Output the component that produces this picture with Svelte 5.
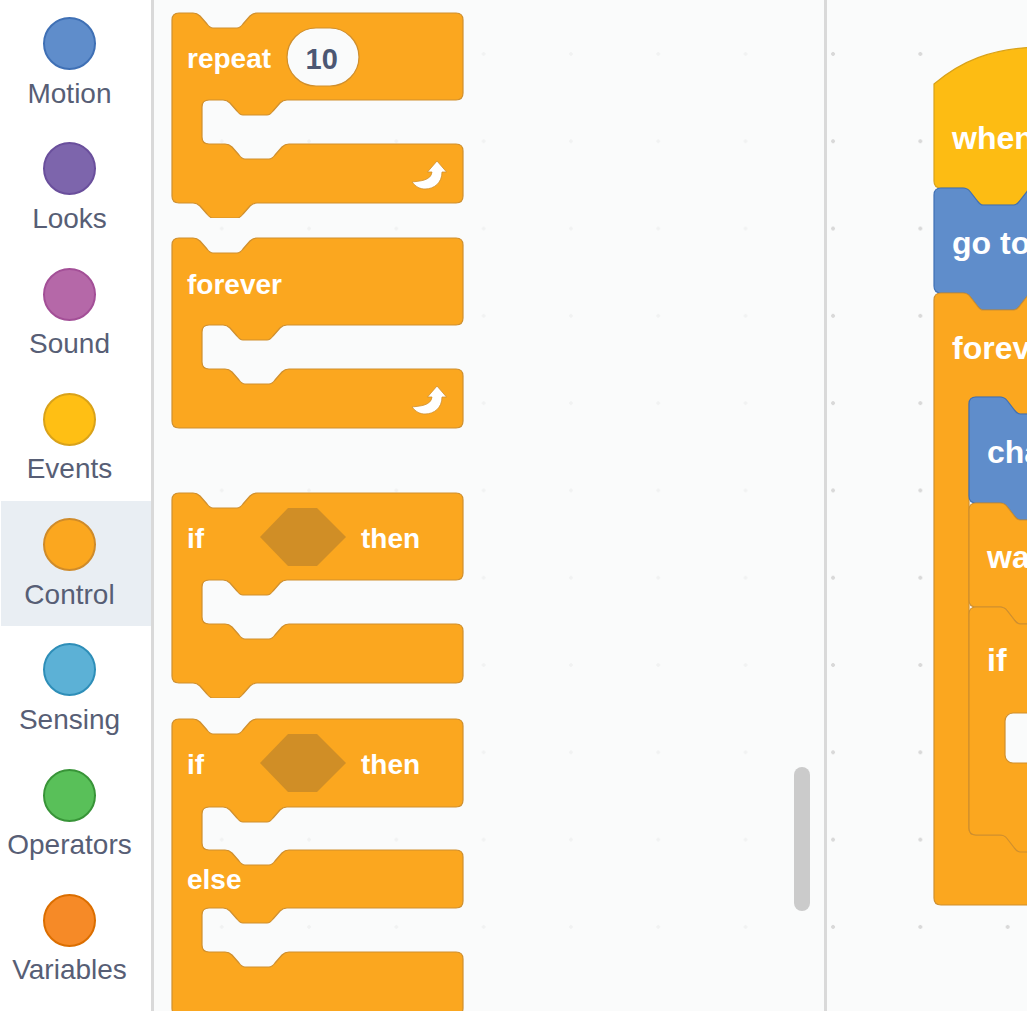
<script>
  const categories = [
    { name: 'Motion', fill: '#5f8dcb', edge: '#3f70b5' },
    { name: 'Looks', fill: '#7d65ac', edge: '#6a4f9c' },
    { name: 'Sound', fill: '#b568a8', edge: '#a34f97' },
    { name: 'Events', fill: '#ffbf14', edge: '#d9a21a' },
    { name: 'Control', fill: '#fba71f', edge: '#cf8b2a', active: true },
    { name: 'Sensing', fill: '#5cb1d6', edge: '#2e8eb8' },
    { name: 'Operators', fill: '#59c059', edge: '#389438' },
    { name: 'Variables', fill: '#f68a27', edge: '#db6e00' }
  ];

  // the connector notch, drawn left to right and right to left
  const notchR = 'c3,0 5,1 7,3 l7,8 c1.5,2 3,4 6,4 h24 c3,0 4.5,-2 6,-4 l7,-8 c2,-2 4,-3 7,-3';
  const notchL = 'c-3,0 -5,1 -7,3 l-7,8 c-1.5,2 -3,4 -6,4 h-24 c-3,0 -4.5,-2 -6,-4 l-7,-8 c-2,-2 -4,-3 -7,-3';

  // workspace blocks are drawn a little larger than the palette ones
  const bigR = 'c3,0 5,1 7,3.5 l7,9 c1.5,2 3,4.5 6,4.5 h31 c3,0 4.5,-2.5 6,-4.5 l7,-9 c2,-2.5 4,-3.5 7,-3.5';
  const bigL = 'c-3,0 -5,1 -7,3.5 l-7,9 c-1.5,2 -3,4.5 -6,4.5 h-31 c-3,0 -4.5,-2.5 -6,-4.5 l-7,-9 c-2,-2.5 -4,-3.5 -7,-3.5';

  // builds a C block; arms = [armBottom, nextArmTop, ...] measured from the block top
  function cBlock(arms, height, tab) {
    const left = 1, top = 1, right = 292, r = 7;
    let d = `M${left},${top + r} q0,-${r} ${r},-${r} H${left + 21} ${notchR} H${right - r} q${r},0 ${r},${r}`;
    for (let i = 0; i < arms.length; i += 2) {
      const bottom = top + arms[i], next = top + arms[i + 1];
      d += ` V${bottom - r} q0,${r} -${r},${r} H${left + 115} ${notchL} H${left + 30 + r} q-${r},0 -${r},${r}`;
      d += ` V${next - r} q0,${r} ${r},${r} H${left + 53} ${notchR} H${right - r} q${r},0 ${r},${r}`;
    }
    d += ` V${top + height - r} q0,${r} -${r},${r}`;
    d += tab ? ` H${left + 85} ${notchL} H${left + r}` : ` H${left + r}`;
    d += ` q-${r},0 -${r},-${r} Z`;
    return d;
  }

  const palette = [
    { d: cBlock([87, 131], 190, true), h: 206, gap: 19 },
    { d: cBlock([87, 131], 190, false), h: 192, gap: 63 },
    { d: cBlock([87, 131], 190, true), h: 206, gap: 20 },
    { d: cBlock([88, 131, 189, 233], 296, false), h: 300, gap: 0 }
  ];
  const arrow = 'M437,161 L446.5,172 H442 C442,183 434,189 425,189 C420,189 416,187 412,182 C419,181 431,181 432,172 H427.5 Z';
  const hex = 'M288,0 H317 L346,29 L317,58 H288 L260,29 Z';

  // stack block on the workspace, runs off the right edge
  function stack(x, y, bottom, n = 29) {
    return `M${x},${y + 7} q0,-7 7,-7 H${x + n} ${bigR} H1100 V${bottom} H${x + n + 71} ${bigL} H${x + 7} q-7,0 -7,-7 Z`;
  }
  const hat = `M934,84 C960,62 990,48 1040,47 H1100 V188 H1034 ${bigL} H941 q-7,0 -7,-7 Z`;
  const forever = `M934,300 q0,-7 7,-7 H963 ${bigR} H1100 V397 H1071 ${bigL} H976 q-7,0 -7,7 V828 q0,7 7,7 H1100 V905 H941 q-7,0 -7,-7 Z`;
  const ifBlock = `M969,614 q0,-7 7,-7 H1000 ${bigR} H1100 V835 H1071 ${bigL} H976 q-7,0 -7,-7 Z`;
</script>

<div class="editor">
  <nav class="categories">
    {#each categories as cat}
      <div class="category" class:active={cat.active}>
        <span class="dot" style="background:{cat.fill};border-color:{cat.edge}"></span>
        <span class="label">{cat.name}</span>
      </div>
    {/each}
  </nav>

  <section class="palette">
    {#each palette as block, i}
      <svg class="block" width="293" height={block.h} style="margin-bottom:{block.gap}px">
        <path class="control" d={block.d} />
        {#if i === 0}
          <text x="16" y="56">repeat</text>
          <rect class="input" x="116" y="16" width="72" height="58" rx="29" />
          <text class="num" x="134.5" y="56.5">10</text>
        {:else if i === 1}
          <text x="16" y="57">forever</text>
        {:else}
          <text x="16" y="56">if</text>
          <path class="hex" d={hex} transform="translate(-171,16)" />
          <text x="190" y="56">then</text>
          {#if i === 3}
            <text x="16" y="171">else</text>
          {/if}
        {/if}
        {#if i < 2}
          <path class="arrow" d={arrow} transform="translate(-171,-12)" />
        {/if}
      </svg>
    {/each}
    <div class="thumb"></div>
  </section>

  <section class="workspace">
    <svg class="script" viewBox="827 0 200 1011">
      <path class="events" d={hat} />
      <text class="big" x="952" y="149">when</text>
      <path class="motion" d={stack(934, 188, 293)} />
      <text class="big" x="952" y="254">go to</text>
      <path class="control" d={forever} />
      <text class="big" x="952" y="359">forever</text>
      <path class="motion" d={stack(969, 397, 503, 31)} />
      <text class="big" x="987" y="463">change</text>
      <path class="control" d={stack(969, 503, 607, 31)} />
      <text class="big" x="987" y="568">wait</text>
      <path class="control" d={ifBlock} />
      <text class="big" x="987" y="671">if</text>
      <rect class="input" x="1005" y="713" width="120" height="50" rx="8" />
    </svg>
  </section>
</div>

<style>
  :global(body) {
    margin: 0;
    overflow: hidden;
  }

  .editor {
    display: flex;
    width: 1027px;
    height: 1011px;
    overflow: hidden;
    background: #fff;
    font-family: "Liberation Sans", Arial, sans-serif;
  }

  .categories {
    flex: none;
    width: 151px;
    padding-left: 1px;
    box-sizing: border-box;
    background: #fff;
  }

  .category {
    display: flex;
    flex-direction: column;
    align-items: center;
    height: 125.25px;
    padding: 17px 13px 0 0;
    box-sizing: border-box;
  }

  .category.active {
    background: #e9eef3;
  }

  .dot {
    width: 49px;
    height: 49px;
    border: 2px solid;
    border-radius: 50%;
  }

  .label {
    margin-top: 6.5px;
    font-size: 28px;
    line-height: 34px;
    color: #575e75;
    white-space: nowrap;
  }

  .palette {
    position: relative;
    flex: none;
    width: 676px;
    height: 1011px;
    padding: 12px 0 0 17px;
    box-sizing: border-box;
    overflow: hidden;
    border-left: 3px solid #d9d9d9;
    border-right: 3px solid #d9d9d9;
    background-color: #fafbfb;
    background-image: radial-gradient(circle, #f1f2f2 1.5px, transparent 2px);
    background-size: 87.3px 87.3px;
    background-position: 24.1px 10.3px;
  }

  .block {
    display: block;
  }

  .thumb {
    position: absolute;
    left: 640px;
    top: 767px;
    width: 16px;
    height: 144px;
    border-radius: 8px;
    background: #cbcbcb;
  }

  .workspace {
    flex: 1;
    min-width: 0;
    height: 1011px;
    overflow: hidden;
    background-color: #fafbfb;
    background-image: radial-gradient(circle, #d9d9d9 1.6px, transparent 2.2px);
    background-size: 87.3px 87.3px;
    background-position: -37.6px 10.3px;
  }

  .script {
    display: block;
    width: 200px;
    height: 1011px;
  }

  text {
    font-size: 28px;
    font-weight: 700;
    fill: #fff;
  }

  text.big {
    font-size: 32px;
  }

  text.num {
    font-size: 29px;
    fill: #4c5773;
  }

  .control {
    fill: #fba71f;
    stroke: #cf8f2e;
    stroke-width: 1.2;
  }

  .motion {
    fill: #5f8dcb;
    stroke: #3f70b5;
    stroke-width: 1.2;
  }

  .events {
    fill: #fdbc13;
    stroke: #d9a21a;
    stroke-width: 1.2;
  }

  .input {
    fill: #fafbfb;
    stroke: #cf8f2e;
    stroke-width: 1.2;
  }

  .hex {
    fill: #d08e26;
  }

  .arrow {
    fill: #fff;
    stroke: #cf8f2e;
    stroke-width: 0.8;
  }
</style>
